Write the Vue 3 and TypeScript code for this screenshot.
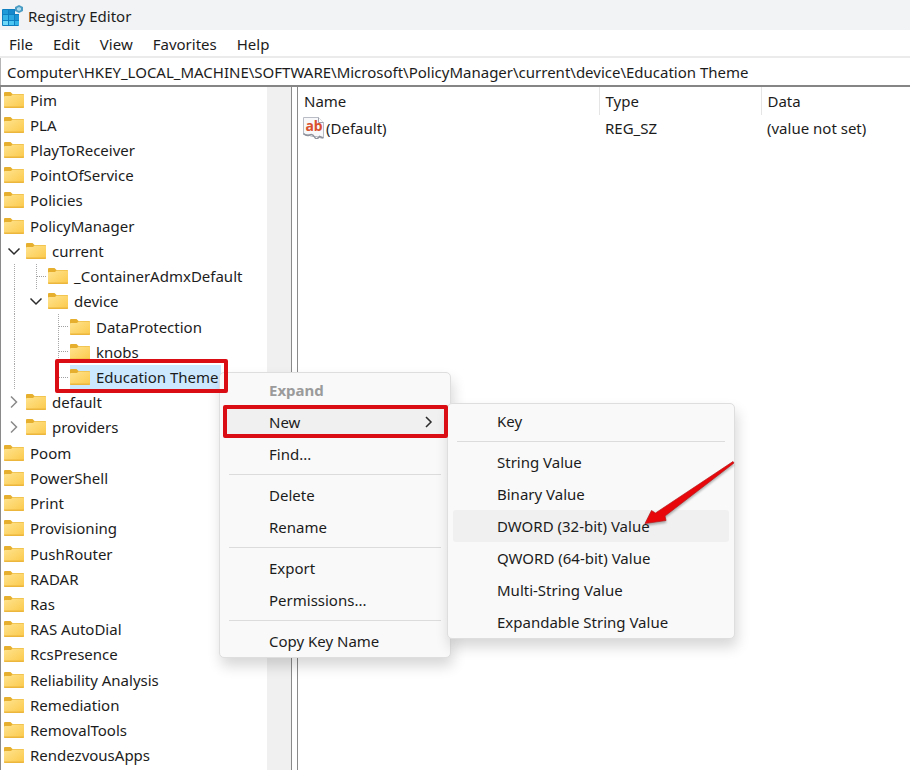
<script setup lang="ts">
import { ref } from 'vue'

type Guide = 'none' | 'line' | 'branch' | 'open' | 'closed'

interface TreeRow {
  name: string
  guides: Guide[]
  selected?: boolean
}

interface MenuEntry {
  label: string
  disabled?: boolean
  active?: boolean
  submenu?: boolean
  divided?: boolean
}

const menuBar: string[] = ['File', 'Edit', 'View', 'Favorites', 'Help']
const address = ref('Computer\\HKEY_LOCAL_MACHINE\\SOFTWARE\\Microsoft\\PolicyManager\\current\\device\\Education Theme')

const root = (name: string): TreeRow => ({ name, guides: [] })

const tree: TreeRow[] = [
  ...['Pim', 'PLA', 'PlayToReceiver', 'PointOfService', 'Policies', 'PolicyManager'].map(root),
  { name: 'current', guides: ['open'] },
  { name: '_ContainerAdmxDefault', guides: ['line', 'branch'] },
  { name: 'device', guides: ['line', 'open'] },
  { name: 'DataProtection', guides: ['line', 'none', 'branch'] },
  { name: 'knobs', guides: ['line', 'none', 'branch'] },
  { name: 'Education Theme', guides: ['line', 'none', 'branch'], selected: true },
  { name: 'default', guides: ['closed'] },
  { name: 'providers', guides: ['closed'] },
  ...[
    'Poom', 'PowerShell', 'Print', 'Provisioning', 'PushRouter', 'RADAR', 'Ras', 'RAS AutoDial',
    'RcsPresence', 'Reliability Analysis', 'Remediation', 'RemovalTools', 'RendezvousApps',
  ].map(root),
]

const contextMenu: MenuEntry[] = [
  { label: 'Expand', disabled: true },
  { label: 'New', active: true, submenu: true },
  { label: 'Find...' },
  { label: 'Delete', divided: true },
  { label: 'Rename' },
  { label: 'Export', divided: true },
  { label: 'Permissions...' },
  { label: 'Copy Key Name', divided: true },
]

const newMenu: MenuEntry[] = [
  { label: 'Key' },
  { label: 'String Value', divided: true },
  { label: 'Binary Value' },
  { label: 'DWORD (32-bit) Value', active: true },
  { label: 'QWORD (64-bit) Value' },
  { label: 'Multi-String Value' },
  { label: 'Expandable String Value' },
]
</script>

<template>
  <div class="window">
    <header class="titlebar">
      <svg class="app-icon" viewBox="0 0 22 22" aria-hidden="true">
        <rect x="1" y="4" width="17" height="17" rx="1" fill="#0e7fc0" />
        <path d="M2 5h5v4H2z" fill="#1e9ad8" />
        <path d="M8 5h5v4H8z" fill="#1689cc" />
        <path d="M2 10h5v5H2z" fill="#35b4e8" />
        <path d="M8 10h5v5H8z" fill="#2aa7e0" />
        <path d="M14 10h4v5h-4z" fill="#1c94d3" />
        <path d="M2 16h5v4H2z" fill="#6ed8f8" />
        <path d="M8 16h5v4H8z" fill="#4cc6f2" />
        <path d="M14 16h4v4h-4z" fill="#35b4e8" />
        <path d="M14 2h6v7h-6z" fill="#f2f3f4" />
        <path d="M18 0l4 2v4l-4 2-4-2V2z" fill="#4a9cc4" />
        <path d="M18 2l2 1v2l-2 1-2-1V3z" fill="#a9d8ec" />
      </svg>
      <h1 class="title">Registry Editor</h1>
    </header>

    <nav class="menubar">
      <button v-for="item in menuBar" :key="item" type="button" class="menubar-item">{{ item }}</button>
    </nav>

    <input v-model="address" class="address" type="text" aria-label="Key path" spellcheck="false" />

    <main class="panes">
      <section class="tree-pane">
        <ul class="tree">
          <li v-for="row in tree" :key="row.name" class="tree-row">
            <span v-for="(guide, i) in row.guides" :key="i" class="guide" :class="guide">
              <svg v-if="guide === 'open'" class="chevron" viewBox="0 0 14 14" aria-hidden="true">
                <path d="M1.500 4.500 7 10l5.500-5.500" />
              </svg>
              <svg v-if="guide === 'closed'" class="chevron faint" viewBox="0 0 14 14" aria-hidden="true">
                <path d="M4 1.500 9.500 7 4 12.500" />
              </svg>
            </span>
            <button type="button" class="key" :class="{ selected: row.selected }">
              <svg class="folder" viewBox="0 0 20 16" aria-hidden="true">
                <defs>
                  <linearGradient id="folder-fill" x1="0" y1="0" x2="1" y2="1">
                    <stop offset="0" stop-color="#ffe490" />
                    <stop offset="1" stop-color="#fbc94a" />
                  </linearGradient>
                </defs>
                <path d="M0 1q0-1 1-1h5.500l2 2H19q1 0 1 1v4H0z" fill="#e6b02e" />
                <path d="M0 5q0-1 1-1h6l1.500-1.500H19q1 0 1 1V15q0 1-1 1H1q-1 0-1-1z" fill="url(#folder-fill)" />
                <path d="M0 14.500V15q0 1 1 1h18q1 0 1-1v-.5z" fill="#ecb63c" />
              </svg>
              <span>{{ row.name }}</span>
            </button>
          </li>
        </ul>
        <div class="scrollbar"></div>
      </section>

      <section class="values-pane">
        <table class="values">
          <colgroup>
            <col class="col-name" />
            <col class="col-type" />
            <col />
          </colgroup>
          <thead>
            <tr>
              <th scope="col">Name</th>
              <th scope="col">Type</th>
              <th scope="col">Data</th>
            </tr>
          </thead>
          <tbody>
            <tr>
              <td>
                <span class="value-name">
                  <span class="string-icon" aria-hidden="true">
                    <svg class="string-sheet" viewBox="0 0 22 22">
                      <path d="M.5.5h15l5 5v15q-2 1.500-4 0t-5-1-5-1-6-1z" fill="#f8f8fa" stroke="#b9bcc4" />
                      <path d="M15.500.5v5h5" fill="#fff" stroke="#9fa3ad" />
                      <path d="M.5 16.500q3 3 6 1.500t5 2 5-.5l4 1.500" fill="none" stroke="#8e929c" stroke-width="1.500" />
                    </svg>
                    <b class="string-text">ab</b>
                  </span>
                  (Default)
                </span>
              </td>
              <td>REG_SZ</td>
              <td>(value not set)</td>
            </tr>
          </tbody>
        </table>
      </section>
    </main>

    <div class="popup context-menu" role="menu">
      <template v-for="entry in contextMenu" :key="entry.label">
        <hr v-if="entry.divided" class="divider" />
        <button type="button" role="menuitem" class="entry" :class="{ active: entry.active }" :disabled="entry.disabled">
          {{ entry.label }}
          <svg v-if="entry.submenu" class="chevron" viewBox="0 0 14 14" aria-hidden="true">
            <path d="M5 2l5 5-5 5" />
          </svg>
        </button>
      </template>
    </div>

    <div class="popup new-menu" role="menu">
      <template v-for="entry in newMenu" :key="entry.label">
        <hr v-if="entry.divided" class="divider" />
        <button type="button" role="menuitem" class="entry" :class="{ active: entry.active }">{{ entry.label }}</button>
      </template>
    </div>

    <div class="mark mark-key"></div>
    <div class="mark mark-new"></div>
    <svg class="arrow" viewBox="0 0 92 68" aria-hidden="true">
      <path d="M90 1.500 91 3 22 56l1 4.500-21 3 6.500-13 4 2.500z" fill="#e8080c" stroke="#b8181a" stroke-width=".7" />
    </svg>
  </div>
</template>

<style>
body {
  margin: 0;
}
</style>

<style scoped>
.window {
  position: relative;
  display: flex;
  flex-direction: column;
  height: 100vh;
  overflow: hidden;
  background: #fff;
  color: #1c1c1c;
  font: 15px/20px "Noto Sans", "Open Sans", sans-serif;
}

button,
input {
  margin: 0;
  padding: 0;
  border: 0;
  background: none;
  color: inherit;
  font: inherit;
  text-align: left;
}

.titlebar {
  display: flex;
  align-items: center;
  gap: 5px;
  height: 30px;
  padding: 2px 1px 0;
  box-sizing: border-box;
  background: #f2f3f4;
}

.app-icon {
  width: 22px;
  height: 22px;
}

.title {
  margin: 0;
  font-size: 15px;
  font-weight: 400;
}

.menubar {
  display: flex;
  gap: 20px;
  height: 24px;
  padding: 2px 9px 0;
  border-bottom: 2px solid #ebebeb;
}

.address {
  height: 27px;
  padding: 0 6px;
  border-left: 1px solid #b5b5b5;
  outline: 0;
}

.panes {
  display: flex;
  flex: 1;
  min-height: 0;
  border-top: 2px solid #858585;
}

.tree-pane {
  display: flex;
  flex: 0 0 290px;
  border-right: 1px solid #8a8a8a;
  border-left: 1px solid #8a8a8a;
}

.tree {
  display: grid;
  flex: 1;
  grid-auto-rows: 1fr;
  margin: 0;
  padding: 0 0 2px 3px;
  list-style: none;
}

.tree-row {
  display: flex;
  align-items: center;
  min-height: 0;
}

.guide {
  display: flex;
  align-items: center;
  align-self: stretch;
  width: 22px;
  padding-left: 3px;
  box-sizing: border-box;
}

.line,
.branch {
  padding: 0;
  background: repeating-linear-gradient(#a8a8a8 0 1px, transparent 1px 2px) 10px 0 / 1px 100% no-repeat;
}

.branch::after {
  flex: 1;
  margin: 0 2px 0 11px;
  border-top: 1px dotted #a0a0a0;
  content: "";
}

.chevron {
  width: 14px;
  height: 14px;
  fill: none;
  stroke: #2b2b2b;
  stroke-width: 1.5;
}

.faint {
  stroke: #8a8a8a;
}

.key {
  display: flex;
  align-items: center;
  gap: 6px;
  height: 24px;
  padding-right: 2px;
  white-space: nowrap;
}

.selected {
  background: #cce8ff;
}

.folder {
  width: 20px;
  height: 16px;
}

.scrollbar {
  width: 24px;
  background: #f0f0f0;
}

.values-pane {
  flex: 1;
  min-width: 0;
  margin-left: 5px;
  border-left: 1px solid #8a8a8a;
}

.values {
  width: 100%;
  border-collapse: collapse;
  table-layout: fixed;
}

.col-name {
  width: 301px;
}

.col-type {
  width: 162px;
}

.values th,
.values td {
  padding: 0 0 0 6px;
  font-weight: 400;
  text-align: left;
  white-space: nowrap;
}

.values th {
  height: 28px;
  border-right: 1px solid #e5e5e5;
}

.values th:last-child {
  border-right: 0;
}

.values td {
  height: 26px;
}

.value-name {
  display: flex;
  align-items: center;
  gap: 1px;
  margin-left: -1px;
}

.string-icon {
  display: grid;
  width: 22px;
  height: 22px;
}

.string-sheet,
.string-text {
  grid-area: 1 / 1;
}

.string-text {
  color: #d9502e;
  font-size: 14px;
  line-height: 17px;
  text-align: center;
}

.popup {
  position: absolute;
  display: flex;
  flex-direction: column;
  box-sizing: border-box;
  padding: 1px 5px 0;
  border: 1px solid #dedede;
  border-radius: 5px;
  background: #f9f9f9;
  box-shadow: 2px 8px 14px rgb(0 0 0 / 16%);
}

.context-menu {
  top: 372px;
  left: 219px;
  width: 232px;
}

.new-menu {
  top: 403px;
  left: 447px;
  width: 288px;
}

.entry {
  display: flex;
  align-items: center;
  justify-content: space-between;
  height: 32px;
  padding: 0 10px 0 44px;
  border-radius: 3px;
}

.entry:disabled {
  color: #9b9b9b;
  font-weight: 700;
}

.active {
  background: #f0f0f0;
}

.divider {
  height: 1px;
  margin: 4px;
  border: 0;
  background: #dcdcdc;
}

.mark {
  position: absolute;
  box-sizing: border-box;
  border: 4px solid #d90d13;
  border-radius: 2px;
}

.mark-key {
  top: 359px;
  left: 55px;
  width: 173px;
  height: 34px;
}

.mark-new {
  top: 405px;
  left: 223px;
  width: 225px;
  height: 33px;
}

.arrow {
  position: absolute;
  top: 460px;
  left: 643px;
  width: 92px;
  height: 68px;
  filter: drop-shadow(0 2px 1px rgb(0 0 0 / 30%));
}
</style>
